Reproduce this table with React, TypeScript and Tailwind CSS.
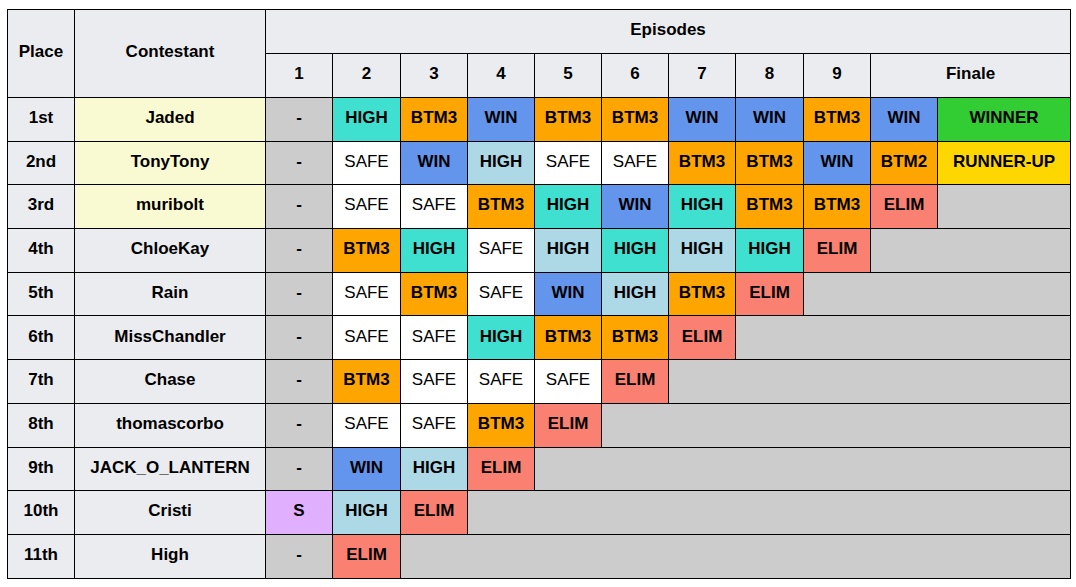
const colors: Record<string, string> = {
  HIGH: 'bg-[#40e0d0] font-bold',
  HIGHL: 'bg-[#add8e6] font-bold',
  BTM3: 'bg-[#ffa500] font-bold',
  BTM2: 'bg-[#ffa500] font-bold',
  WIN: 'bg-[#6495ed] font-bold',
  SAFE: 'bg-white',
  ELIM: 'bg-[#fa8072] font-bold',
  WINNER: 'bg-[#32cd32] font-bold',
  'RUNNER-UP': 'bg-[#ffd700] font-bold',
  S: 'bg-[#e0b0ff] font-bold',
  '-': 'bg-[#cccccc] font-bold'
};

interface Row {
  place: string;
  name: string;
  top: boolean;
  results: string[];
}

const rows: Row[] = [
  { place: '1st', name: 'Jaded', top: true, results: ['-', 'HIGH', 'BTM3', 'WIN', 'BTM3', 'BTM3', 'WIN', 'WIN', 'BTM3', 'WIN', 'WINNER'] },
  { place: '2nd', name: 'TonyTony', top: true, results: ['-', 'SAFE', 'WIN', 'HIGHL', 'SAFE', 'SAFE', 'BTM3', 'BTM3', 'WIN', 'BTM2', 'RUNNER-UP'] },
  { place: '3rd', name: 'muribolt', top: true, results: ['-', 'SAFE', 'SAFE', 'BTM3', 'HIGH', 'WIN', 'HIGH', 'BTM3', 'BTM3', 'ELIM'] },
  { place: '4th', name: 'ChloeKay', top: false, results: ['-', 'BTM3', 'HIGH', 'SAFE', 'HIGHL', 'HIGH', 'HIGHL', 'HIGH', 'ELIM'] },
  { place: '5th', name: 'Rain', top: false, results: ['-', 'SAFE', 'BTM3', 'SAFE', 'WIN', 'HIGHL', 'BTM3', 'ELIM'] },
  { place: '6th', name: 'MissChandler', top: false, results: ['-', 'SAFE', 'SAFE', 'HIGH', 'BTM3', 'BTM3', 'ELIM'] },
  { place: '7th', name: 'Chase', top: false, results: ['-', 'BTM3', 'SAFE', 'SAFE', 'SAFE', 'ELIM'] },
  { place: '8th', name: 'thomascorbo', top: false, results: ['-', 'SAFE', 'SAFE', 'BTM3', 'ELIM'] },
  { place: '9th', name: 'JACK_O_LANTERN', top: false, results: ['-', 'WIN', 'HIGHL', 'ELIM'] },
  { place: '10th', name: 'Cristi', top: false, results: ['S', 'HIGHL', 'ELIM'] },
  { place: '11th', name: 'High', top: false, results: ['-', 'ELIM'] }
];

const TOTAL = 11;
const cell = 'border border-black text-center align-middle px-0 pt-0 pb-[3px]';
const head = `${cell} bg-[#eaecf0] font-bold`;

export default function App() {
  return (
    <div className="min-h-[587px] bg-white pl-[7px] pt-[9px] font-['Liberation_Sans',Arial,sans-serif] text-[17px] text-black">
      <table className="w-[1063px] table-fixed border-collapse">
        <colgroup>
          <col className="w-[67px]" />
          <col className="w-[191px]" />
          <col className="w-[67px]" />
          <col className="w-[68px]" />
          <col className="w-[67px]" />
          <col className="w-[67px]" />
          <col className="w-[67px]" />
          <col className="w-[67px]" />
          <col className="w-[67px]" />
          <col className="w-[68px]" />
          <col className="w-[67px]" />
          <col className="w-[67px]" />
          <col className="w-[133px]" />
        </colgroup>
        <thead>
          <tr className="h-[44px]">
            <th rowSpan={2} className={head}>Place</th>
            <th rowSpan={2} className={head}>Contestant</th>
            <th colSpan={11} className={head}>Episodes</th>
          </tr>
          <tr className="h-[44px]">
            {['1', '2', '3', '4', '5', '6', '7', '8', '9'].map((n) => (
              <th key={n} className={head}>{n}</th>
            ))}
            <th colSpan={2} className={head}>Finale</th>
          </tr>
        </thead>
        <tbody>
          {rows.map((row) => {
            const rest = TOTAL - row.results.length;
            return (
              <tr key={row.place} className="h-[43.7px]">
                <td className={head}>{row.place}</td>
                <td className={`${cell} font-bold ${row.top ? 'bg-[#fafad2]' : 'bg-[#eaecf0]'}`}>{row.name}</td>
                {row.results.map((r, i) => (
                  <td key={i} className={`${cell} ${colors[r]}`}>
                    {r === 'HIGHL' ? 'HIGH' : r}
                  </td>
                ))}
                {rest > 0 ? <td colSpan={rest} className={`${cell} bg-[#cccccc]`} /> : null}
              </tr>
            );
          })}
        </tbody>
      </table>
    </div>
  );
}
